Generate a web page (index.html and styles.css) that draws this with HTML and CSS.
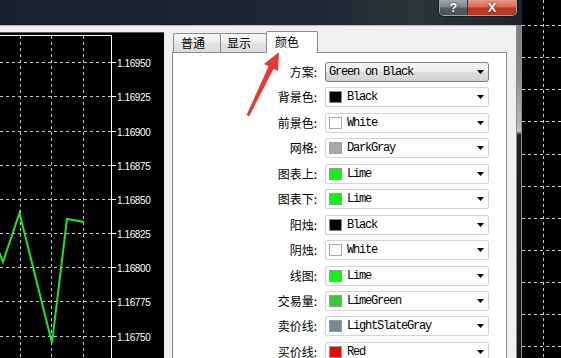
FILE: index.html
```html
<!DOCTYPE html>
<html lang="zh">
<head>
<meta charset="utf-8">
<link rel="stylesheet" href="styles.css">
</head>
<body>
<div class="screen">
  <div class="dialog">
    <div class="titlebar">
      <div class="caption-btns">
        <div class="cbtn help">?</div>
        <div class="cbtn close">X</div>
      </div>
    </div>
    <div class="frame-body">
      <div class="client">
        <div class="preview">
          <svg class="preview-svg" width="164" height="326" viewBox="0 0 164 326">
            <line x1="0" y1="0.5" x2="164" y2="0.5" stroke="#5a5a5a"/>
            <g stroke="#c8c8c8" stroke-dasharray="3 3" stroke-width="1">
              <line x1="20.5" y1="4" x2="20.5" y2="326"/>
              <line x1="51.5" y1="4" x2="51.5" y2="326"/>
              <line x1="83.5" y1="4" x2="83.5" y2="326"/>
              <line x1="0" y1="30.5" x2="111" y2="30.5"/>
              <line x1="0" y1="64.5" x2="111" y2="64.5"/>
              <line x1="0" y1="99.5" x2="111" y2="99.5"/>
              <line x1="0" y1="133.5" x2="111" y2="133.5"/>
              <line x1="0" y1="167.5" x2="111" y2="167.5"/>
              <line x1="0" y1="201.5" x2="111" y2="201.5"/>
              <line x1="0" y1="235.5" x2="111" y2="235.5"/>
              <line x1="0" y1="269.5" x2="111" y2="269.5"/>
              <line x1="0" y1="304.5" x2="111" y2="304.5"/>
            </g>
            <g stroke="#ffffff" stroke-width="1">
              <line x1="0" y1="3.5" x2="112" y2="3.5"/>
              <line x1="111.5" y1="3" x2="111.5" y2="326"/>
              <line x1="111" y1="30.5" x2="116" y2="30.5"/>
              <line x1="111" y1="64.5" x2="116" y2="64.5"/>
              <line x1="111" y1="99.5" x2="116" y2="99.5"/>
              <line x1="111" y1="133.5" x2="116" y2="133.5"/>
              <line x1="111" y1="167.5" x2="116" y2="167.5"/>
              <line x1="111" y1="201.5" x2="116" y2="201.5"/>
              <line x1="111" y1="235.5" x2="116" y2="235.5"/>
              <line x1="111" y1="269.5" x2="116" y2="269.5"/>
              <line x1="111" y1="304.5" x2="116" y2="304.5"/>
            </g>
            <g class="axis-labels" fill="#ffffff">
              <text x="117" y="34.5">1.16950</text>
              <text x="117" y="68.5">1.16925</text>
              <text x="117" y="103.5">1.16900</text>
              <text x="117" y="137.5">1.16875</text>
              <text x="117" y="171.5">1.16850</text>
              <text x="117" y="205.5">1.16825</text>
              <text x="117" y="239.5">1.16800</text>
              <text x="117" y="273.5">1.16775</text>
              <text x="117" y="308.5">1.16750</text>
            </g>
            <polyline points="-2,217 3,230 19.5,181 52,311 67,187 84,190" fill="none" stroke="#1ee81e" stroke-width="2" stroke-linejoin="miter"/>
          </svg>
        </div>
        <div class="tabs">
          <div class="tabstrip">
            <div class="tab">普通</div>
            <div class="tab">显示</div>
            <div class="tab active">颜色</div>
          </div>
          <div class="panel">
            <div class="form">
              <div class="lbl">方案:</div>
              <div class="select combo"><span class="val">Green on Black</span><svg class="caret" width="7" height="4" viewBox="0 0 7 4"><polygon points="0,0 7,0 3.5,4" fill="#000"/></svg></div>

              <div class="lbl">背景色:</div>
              <div class="select"><span class="sw sw-black"></span><span class="val">Black</span><svg class="caret" width="7" height="4" viewBox="0 0 7 4"><polygon points="0,0 7,0 3.5,4" fill="#000"/></svg></div>

              <div class="lbl">前景色:</div>
              <div class="select"><span class="sw sw-white"></span><span class="val">White</span><svg class="caret" width="7" height="4" viewBox="0 0 7 4"><polygon points="0,0 7,0 3.5,4" fill="#000"/></svg></div>

              <div class="lbl">网格:</div>
              <div class="select"><span class="sw sw-darkgray"></span><span class="val">DarkGray</span><svg class="caret" width="7" height="4" viewBox="0 0 7 4"><polygon points="0,0 7,0 3.5,4" fill="#000"/></svg></div>

              <div class="lbl">图表上:</div>
              <div class="select"><span class="sw sw-lime"></span><span class="val">Lime</span><svg class="caret" width="7" height="4" viewBox="0 0 7 4"><polygon points="0,0 7,0 3.5,4" fill="#000"/></svg></div>

              <div class="lbl">图表下:</div>
              <div class="select"><span class="sw sw-lime"></span><span class="val">Lime</span><svg class="caret" width="7" height="4" viewBox="0 0 7 4"><polygon points="0,0 7,0 3.5,4" fill="#000"/></svg></div>

              <div class="lbl">阳烛:</div>
              <div class="select"><span class="sw sw-black"></span><span class="val">Black</span><svg class="caret" width="7" height="4" viewBox="0 0 7 4"><polygon points="0,0 7,0 3.5,4" fill="#000"/></svg></div>

              <div class="lbl">阴烛:</div>
              <div class="select"><span class="sw sw-white"></span><span class="val">White</span><svg class="caret" width="7" height="4" viewBox="0 0 7 4"><polygon points="0,0 7,0 3.5,4" fill="#000"/></svg></div>

              <div class="lbl">线图:</div>
              <div class="select"><span class="sw sw-lime"></span><span class="val">Lime</span><svg class="caret" width="7" height="4" viewBox="0 0 7 4"><polygon points="0,0 7,0 3.5,4" fill="#000"/></svg></div>

              <div class="lbl">交易量:</div>
              <div class="select"><span class="sw sw-limegreen"></span><span class="val">LimeGreen</span><svg class="caret" width="7" height="4" viewBox="0 0 7 4"><polygon points="0,0 7,0 3.5,4" fill="#000"/></svg></div>

              <div class="lbl">卖价线:</div>
              <div class="select"><span class="sw sw-slate"></span><span class="val">LightSlateGray</span><svg class="caret" width="7" height="4" viewBox="0 0 7 4"><polygon points="0,0 7,0 3.5,4" fill="#000"/></svg></div>

              <div class="lbl">买价线:</div>
              <div class="select"><span class="sw sw-red"></span><span class="val">Red</span><svg class="caret" width="7" height="4" viewBox="0 0 7 4"><polygon points="0,0 7,0 3.5,4" fill="#000"/></svg></div>
            </div>
          </div>
        </div>
      </div>
      <div class="frame-right"></div>
    </div>
  </div>
  <div class="bgchart">
    <svg width="39" height="358" viewBox="0 0 39 358">
      <g stroke="#c8c8c8" stroke-dasharray="3 3" stroke-width="1">
        <line x1="21.5" y1="0" x2="21.5" y2="358"/>
        <line x1="0" y1="25.5" x2="39" y2="25.5"/>
        <line x1="0" y1="57.5" x2="39" y2="57.5"/>
        <line x1="0" y1="89.5" x2="39" y2="89.5"/>
        <line x1="0" y1="121.5" x2="39" y2="121.5"/>
        <line x1="0" y1="154.5" x2="39" y2="154.5"/>
        <line x1="0" y1="186.5" x2="39" y2="186.5"/>
        <line x1="0" y1="218.5" x2="39" y2="218.5"/>
        <line x1="0" y1="250.5" x2="39" y2="250.5"/>
        <line x1="0" y1="282.5" x2="39" y2="282.5"/>
        <line x1="0" y1="314.5" x2="39" y2="314.5"/>
        <line x1="0" y1="346.5" x2="39" y2="346.5"/>
      </g>
    </svg>
  </div>
  <svg class="annot" width="561" height="358" viewBox="0 0 561 358">
    <polygon points="279,52 278,71 273.5,68.8 249.2,116.2 246.6,115 268.6,66.2 264,64" fill="#e8392f"/>
  </svg>
</div>
</body>
</html>
```

FILE: styles.css
```css
* { box-sizing: border-box; }
html, body { margin: 0; padding: 0; background: #000; }
.screen {
  position: relative;
  width: 561px;
  height: 358px;
  overflow: hidden;
  display: flex;
  background: #000;
  font-family: "Noto Sans CJK SC", "Liberation Sans", sans-serif;
}
.dialog {
  width: 522px;
  flex: none;
  display: flex;
  flex-direction: column;
  background: linear-gradient(90deg, #1a202d 0%, #1d2331 40%, #202735 62%, #2b3435 80%, #252c31 92%, #1e242a 100%);
}
.titlebar {
  height: 25px;
  flex: none;
  display: flex;
  justify-content: flex-end;
  align-items: flex-start;
  padding-right: 5px;
}
.caption-btns {
  display: flex;
  height: 16px;
  border: 1px solid #9ea3a8;
  border-top: none;
  border-radius: 0 0 5px 5px;
  overflow: hidden;
  box-shadow: 0 0 0 1px #1a1d20;
}
.cbtn {
  height: 15px;
  display: flex;
  align-items: center;
  justify-content: center;
  color: #fff;
  font-family: "Liberation Sans", sans-serif;
  font-weight: bold;
  font-size: 12px;
  line-height: 1;
  text-shadow: 0 0 2px #222;
}
.help {
  width: 28px;
  background: linear-gradient(#a3aaaf 0%, #7d858b 45%, #545d63 55%, #4a5258 100%);
  border-right: 1px solid #2d3236;
}
.close {
  width: 48px;
  background: linear-gradient(#e69a88 0%, #d66a52 45%, #c2361e 55%, #b63a24 100%);
  font-size: 13px;
}
.frame-body {
  flex: 1;
  display: flex;
  min-height: 0;
}
.client {
  width: 517px;
  flex: none;
  display: flex;
  gap: 8px;
  padding: 6px 9px 0 0;
  background: #f0f0f0;
  border-top: 1px solid #b8b8b8;
  border-right: 1px solid #8c8c8c;
}
.preview {
  width: 164px;
  flex: none;
  background: #000;
}
.preview-svg { display: block; }
.axis-labels {
  font-family: "Liberation Sans", sans-serif;
  font-size: 10px;
  letter-spacing: -0.4px;
}
.frame-right {
  width: 5px;
  flex: none;
  background: linear-gradient(#7e7e7e 0px, #8c8c8c 50px, #b8b8b8 100px, #c4c4c4 106px, #1e1e1e 110px, #151515 100%);
  border-right: 1px solid #8f8f8f;
}
.bgchart {
  flex: 1;
  background: #000;
}
.bgchart svg { display: block; }
.tabs {
  width: 335px;
  flex: none;
  display: flex;
  flex-direction: column;
  margin-top: -1px;
}
.tabstrip {
  height: 21px;
  display: flex;
  align-items: flex-end;
  padding-left: 1px;
  position: relative;
  z-index: 1;
}
.tab {
  width: 48px;
  height: 19px;
  padding-left: 7px;
  font-size: 12px;
  line-height: 18px;
  color: #000;
  border: 1px solid #898c95;
  border-bottom: none;
  border-radius: 2px 2px 0 0;
  background: linear-gradient(#f7f7f7, #ebebeb 50%, #e3e3e3 51%, #dcdcdc);
}
.tab + .tab {
  width: 47px;
  margin-left: -1px;
  padding-left: 6px;
}
.tab.active {
  width: 52px;
  height: 22px;
  margin-bottom: -1px;
  padding-left: 8px;
  line-height: 19px;
  background: #fff;
}
.panel {
  flex: 1;
  background: #fff;
  border: 1px solid #898c95;
  border-bottom: none;
}
.form {
  display: grid;
  grid-template-columns: 1fr 164px;
  grid-auto-rows: 20px;
  column-gap: 8px;
  row-gap: 5.45px;
  padding: 9px 17px 0 0;
}
.lbl {
  text-align: right;
  font-size: 12px;
  line-height: 19px;
  color: #000;
}
.select {
  display: flex;
  align-items: center;
  height: 20px;
  padding: 0 4px 0 3px;
  border: 1px solid #d4d4d4;
  border-radius: 2px;
  background: #fff;
}
.select.combo {
  border-color: #7a7a7a;
  border-radius: 3px;
  background: linear-gradient(#f4f4f4, #ebebeb 50%, #dedede 51%, #d2d2d2);
}
.sw {
  width: 13px;
  height: 12px;
  flex: none;
  border: 1px solid #8a8a8a;
  margin-right: 5px;
}
.sw-black { background: #000; }
.sw-white { background: #fff; border-color: #a8a8a8; }
.sw-darkgray { background: #a9a9a9; border-color: #9c9c9c; }
.sw-lime { background: #00ff00; border-color: #9a9a9a; }
.sw-limegreen { background: #32cd32; border-color: #9a9a9a; }
.sw-slate { background: #778899; border-color: #9a9a9a; }
.sw-red { background: #ff0000; border-color: #9a9a9a; }
.val {
  flex: 1;
  font-family: "Liberation Mono", monospace;
  font-size: 12px;
  letter-spacing: -1.2px;
  color: #000;
  white-space: nowrap;
  line-height: 18px;
}
.caret {
  flex: none;
  display: block;
}
.annot {
  position: absolute;
  left: 0;
  top: 0;
  pointer-events: none;
}
```
